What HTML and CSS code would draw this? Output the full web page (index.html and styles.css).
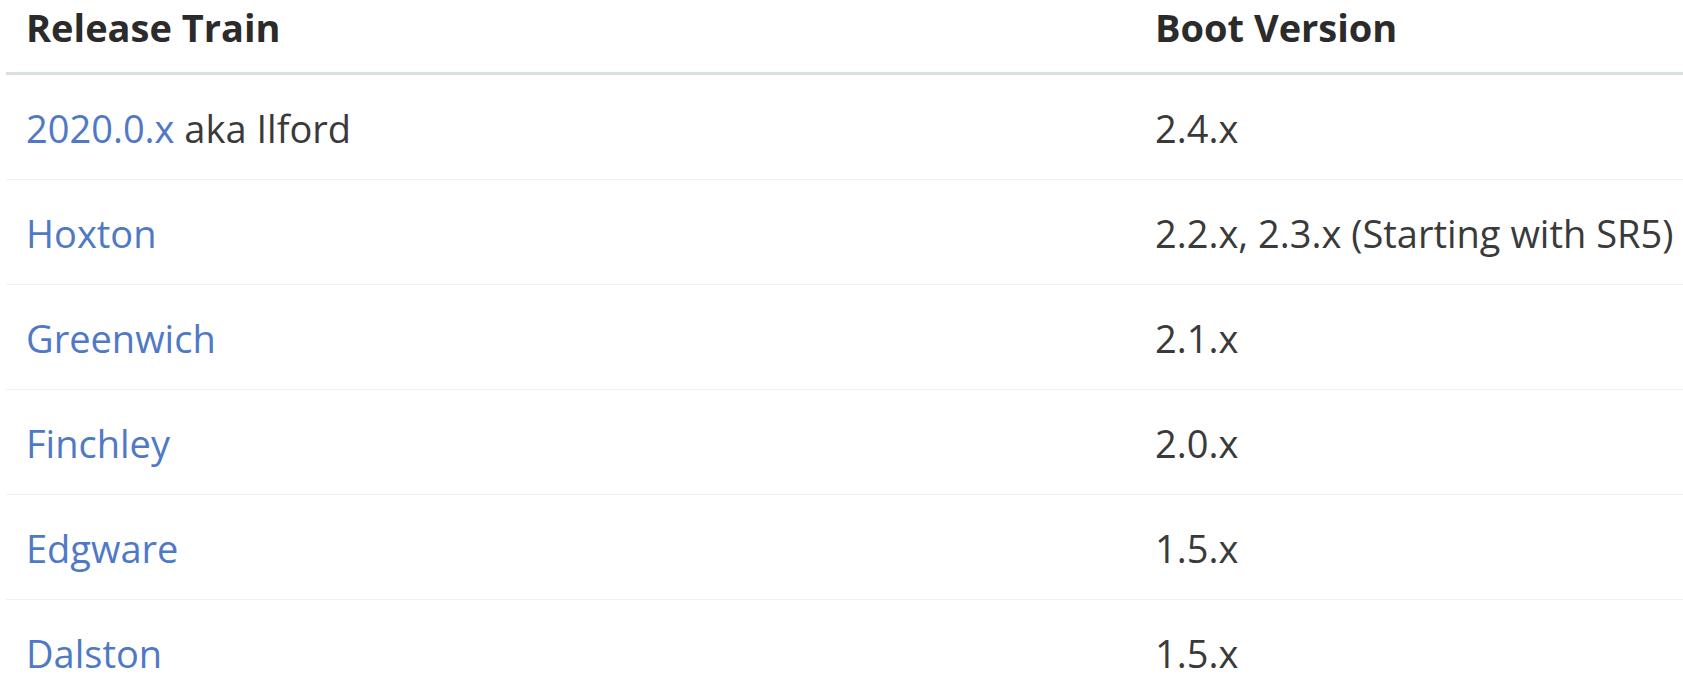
FILE: index.html
```html
<!DOCTYPE html>
<html lang="en">
<head>
<meta charset="utf-8">
<title>Release Trains</title>
<link rel="stylesheet" href="styles.css">
</head>
<body>
<table class="trains">
  <thead>
    <tr>
      <th class="col-train">Release Train</th>
      <th class="col-boot">Boot Version</th>
    </tr>
  </thead>
  <tbody>
    <tr><td><a href="#">2020.0.x</a> aka Ilford</td><td>2.4.x</td></tr>
    <tr><td><a href="#">Hoxton</a></td><td>2.2.x, 2.3.x (Starting with SR5)</td></tr>
    <tr><td><a href="#">Greenwich</a></td><td>2.1.x</td></tr>
    <tr><td><a href="#">Finchley</a></td><td>2.0.x</td></tr>
    <tr><td><a href="#">Edgware</a></td><td>1.5.x</td></tr>
    <tr><td><a href="#">Dalston</a></td><td>1.5.x</td></tr>
  </tbody>
</table>
</body>
</html>
```
FILE: styles.css
```css
html, body {
  margin: 0;
  padding: 0;
  background: #ffffff;
  overflow: hidden;
}

body {
  font-family: "Open Sans", "Liberation Sans", sans-serif;
  font-size: 38px;
  color: #3a3a3a;
}

.trains {
  border-collapse: collapse;
  margin: -25px 0 0 6px;
  width: 1720px;
  line-height: 54px;
}

.trains th {
  text-align: left;
  font-size: 38px;
  font-weight: 700;
  color: #2b2b2b;
  padding: 25px 20px 18px;
  border-bottom: 3px solid #d9e1e0;
}

.col-train {
  width: 1089px;
}

.trains td {
  padding: 26px 20px 24px;
  border-bottom: 1px solid #edf1f0;
  white-space: nowrap;
}

.trains a {
  color: #4f79c6;
  text-decoration: none;
}
```
